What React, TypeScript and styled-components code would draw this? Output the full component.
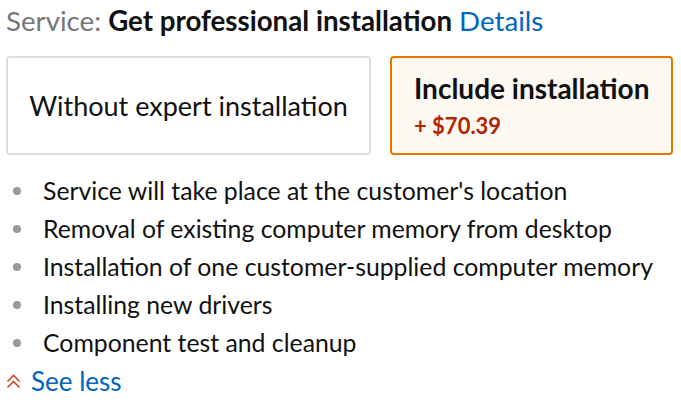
import React from "react";
import styled, { createGlobalStyle } from "styled-components";

const Global = createGlobalStyle`
  html, body { margin: 0; padding: 0; background: #fff; }
  body { font-family: Lato, "Liberation Sans", sans-serif; color: #111; }
`;

const Wrap = styled.div`
  width: 681px;
  padding: 4px 6px 0 6px;
  box-sizing: border-box;
`;

const Heading = styled.div`
  font-size: 27.7px;
  line-height: 34px;
  white-space: nowrap;
`;

const Label = styled.span`
  color: #777;
`;

const Strong = styled.span`
  font-weight: 700;
  color: #111;
`;

const Link = styled.a`
  color: #0066c0;
  text-decoration: none;
`;

const Options = styled.div`
  display: flex;
  gap: 19px;
  margin-top: 18px;
`;

const Option = styled.div<{ $selected?: boolean }>`
  box-sizing: border-box;
  height: 99px;
  border-radius: 4px;
  border: 2px solid ${(p) => (p.$selected ? "#e77600" : "#dddddd")};
  background: ${(p) => (p.$selected ? "#fef8f2" : "#fff")};
  display: flex;
  flex-direction: column;
  justify-content: center;
  align-items: ${(p) => (p.$selected ? "flex-start" : "center")};
  padding: ${(p) => (p.$selected ? "0 22px" : "0")};
  width: ${(p) => (p.$selected ? "283px" : "365px")};
`;

const OptionTitle = styled.div<{ $bold?: boolean }>`
  font-size: ${(p) => (p.$bold ? "28px" : "27px")};
  line-height: 30px;
  white-space: nowrap;
  font-weight: ${(p) => (p.$bold ? 700 : 400)};
`;

const Price = styled.div`
  font-size: 22px;
  line-height: 24px;
  font-weight: 700;
  color: #b12704;
  margin-top: 11px;
`;

const List = styled.ul`
  list-style: none;
  margin: 17px 0 0 0;
  padding: 0;
`;

const Item = styled.li`
  display: flex;
  align-items: center;
  font-size: 24.8px;
  line-height: 38px;
  &::before {
    content: "";
    width: 8px;
    height: 8px;
    border-radius: 50%;
    background: #999;
    margin: 0 22px 0 7px;
    flex-shrink: 0;
  }
`;

const SeeLess = styled.div`
  display: flex;
  align-items: center;
  gap: 10px;
  font-size: 26px;
  line-height: 38px;
`;

const Chevrons = () => (
  <svg width="15" height="15" viewBox="0 0 15 15" fill="none" stroke="#cc4b25" strokeWidth="1.6">
    <polyline points="1.5,7.5 7.5,1.5 13.5,7.5" />
    <polyline points="1.5,13.5 7.5,7.5 13.5,13.5" />
  </svg>
);

const bullets = [
  "Service will take place at the customer's location",
  "Removal of existing computer memory from desktop",
  "Installation of one customer-supplied computer memory",
  "Installing new drivers",
  "Component test and cleanup",
];

export default function App() {
  return (
    <Wrap>
      <Global />
      <Heading>
        <Label>Service: </Label>
        <Strong>Get professional installation</Strong> <Link>Details</Link>
      </Heading>
      <Options>
        <Option>
          <OptionTitle>Without expert installation</OptionTitle>
        </Option>
        <Option $selected>
          <OptionTitle $bold>Include installation</OptionTitle>
          <Price>+ $70.39</Price>
        </Option>
      </Options>
      <List>
        {bullets.map((b) => (
          <Item key={b}>{b}</Item>
        ))}
      </List>
      <SeeLess>
        <Chevrons />
        <Link>See less</Link>
      </SeeLess>
    </Wrap>
  );
}
